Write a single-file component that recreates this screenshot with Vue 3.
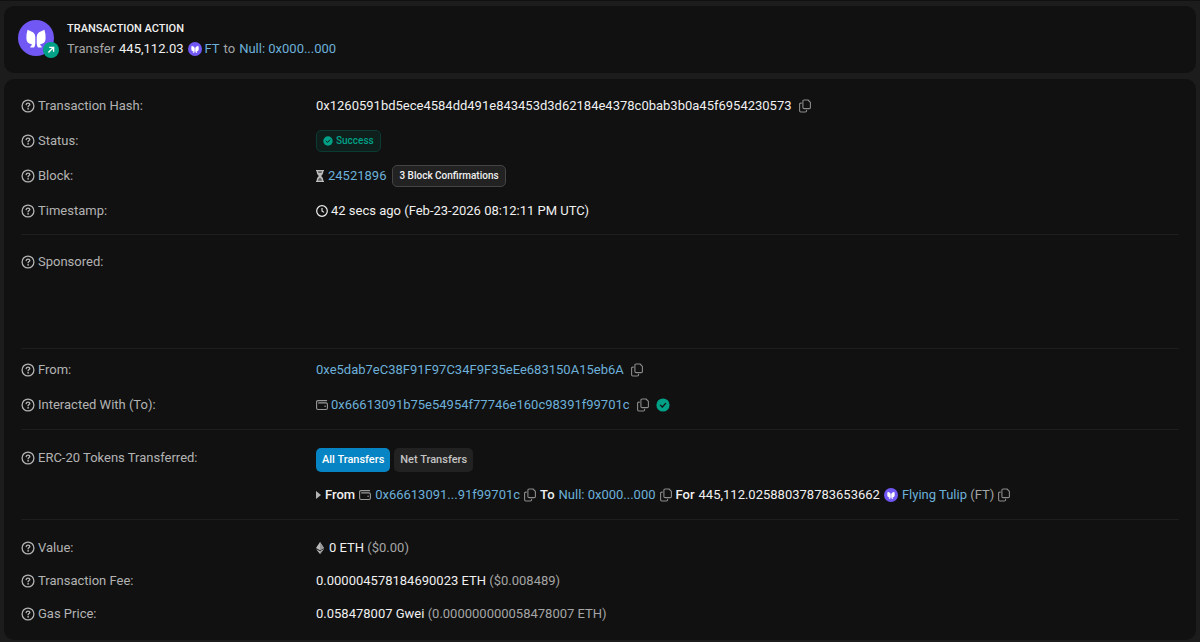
<script setup>
import { h } from 'vue'

const svg = (box, cls, children) =>
  h('svg', { viewBox: box, class: cls, 'aria-hidden': 'true' }, children)
const line = (d, w = 1.5) =>
  h('path', { d, fill: 'none', stroke: 'currentColor', 'stroke-width': w, 'stroke-linecap': 'round', 'stroke-linejoin': 'round' })

const HelpIcon = () =>
  svg('0 0 14 14', 'help', [
    h('circle', { cx: 7, cy: 7, r: 5.9, fill: 'none', stroke: 'currentColor', 'stroke-width': 1.3 }),
    line('M5.2 5.5C5.3 4.5 6 4.1 7 4.1C8.1 4.1 8.8 4.7 8.8 5.5C8.8 6.5 7.1 6.6 7.1 7.8', 1.4),
    h('circle', { cx: 7.1, cy: 9.8, r: 0.9, fill: 'currentColor' })
  ])

const CopyIcon = () =>
  svg('0 0 12 14', 'copy', [
    line('M5.1 1H9L11.4 3.4V8.4Q11.4 9.6 10.2 9.6H5.1Q3.9 9.6 3.9 8.4V2.2Q3.9 1 5.1 1Z', 1.1),
    line('M2.4 4.1H1.8Q.6 4.1 .6 5.3V11.8Q.6 13 1.8 13H6.4Q7.6 13 7.6 11.8V11.3', 1.1)
  ])

const WalletIcon = () =>
  svg('0 0 12 12', 'wallet', [
    line('M10.6 1.6H2.1Q.6 1.6 .6 3V9Q.6 10.5 2.1 10.5H9.9Q11.4 10.5 11.4 9V5.2Q11.4 3.9 9.9 3.9H2.6', 1.1),
    h('circle', { cx: 9.1, cy: 7.2, r: 0.8, fill: 'currentColor' })
  ])

const CheckIcon = () =>
  svg('0 0 14 14', 'check', [
    h('circle', { cx: 7, cy: 7, r: 6.6, fill: '#00a186' }),
    h('path', { d: 'M4.4 7.1L6.3 9L9.7 5.4', fill: 'none', stroke: '#111', 'stroke-width': 1.3, 'stroke-linecap': 'round' })
  ])

const TulipIcon = () =>
  svg('0 0 36 36', 'tulip', [
    h('circle', { cx: 18, cy: 18, r: 18, fill: '#7158f5' }),
    h('path', {
      fill: '#fff',
      d: 'M9.6 9.8L15 12.2Q17.3 13.8 17.3 17V23.4Q17.2 25.4 16 27.6H12.2Q12.4 25.8 14 25L13.6 24.2Q8.6 23.6 8.4 18.6Q8.2 13.6 9.6 9.8ZM26.4 9.8L21 12.2Q18.7 13.8 18.7 17V23.4Q18.8 25.4 20 27.6H23.8Q23.6 25.8 22 25L22.4 24.2Q27.4 23.6 27.6 18.6Q27.8 13.6 26.4 9.8Z'
    })
  ])

const Label = (props) => h('div', { class: 'label' }, [h(HelpIcon), h('span', props.text)])
Label.props = ['text']

const CopyButton = (props) =>
  h('button', { type: 'button', class: 'copy-button', 'aria-label': props.name }, [h(CopyIcon)])
CopyButton.props = ['name']
</script>

<template>
  <main class="page">
    <section class="card action">
      <div class="avatar">
        <TulipIcon />
        <span class="badge">
          <svg viewBox="0 0 16 16" aria-hidden="true">
            <path d="M5.4 10.6L10.4 5.6M6.2 5.4H10.6V9.8" fill="none" stroke="#fff" stroke-width="1.4" />
          </svg>
        </span>
      </div>
      <div>
        <h1>TRANSACTION ACTION</h1>
        <p class="summary">
          <span>Transfer</span>
          <span class="strong">445,112.03</span>
          <a href="#token" class="token"><TulipIcon />FT</a>
          <span>to</span>
          <a href="#null">Null: 0x000...000</a>
        </p>
      </div>
    </section>

    <section class="card details">
      <div class="group">
        <div class="row">
          <Label text="Transaction Hash:" />
          <div class="value hash">
            <span>0x1260591bd5ece4584dd491e843453d3d62184e4378c0bab3b0a45f6954230573</span>
            <CopyButton name="Copy transaction hash" />
          </div>
        </div>
        <div class="row">
          <Label text="Status:" />
          <div class="value"><span class="pill success"><CheckIcon />Success</span></div>
        </div>
        <div class="row">
          <Label text="Block:" />
          <div class="value block">
            <svg class="hourglass" viewBox="0 0 8 12" aria-hidden="true">
              <path d="M0 0H8V1.3H7.3C7.3 3.6 6.6 4.7 5.1 6C6.6 7.3 7.3 8.4 7.3 10.7H8V12H0V10.7H.7C.7 8.4 1.4 7.3 2.9 6C1.4 4.7 .7 3.6 .7 1.3H0Z" fill="currentColor" />
              <path d="M2 1.3H6L5.5 3H2.5ZM2 10.7C2.1 9.5 2.9 8.4 4 7.7C5.1 8.4 5.9 9.5 6 10.7Z" fill="#111" fill-opacity=".55" />
            </svg>
            <a href="#block">24521896</a>
            <span class="pill confirmations">3 Block Confirmations</span>
          </div>
        </div>
        <div class="row">
          <Label text="Timestamp:" />
          <div class="value time">
            <svg class="clock" viewBox="0 0 12 12" fill="none" stroke="currentColor" aria-hidden="true">
              <circle cx="6" cy="6" r="5.3" stroke-width="1.2" />
              <path d="M6 2.9V6L8 7.4" stroke-width="1.1" />
            </svg>
            <span>42 secs ago (Feb-23-2026 08:12:11 PM UTC)</span>
          </div>
        </div>
      </div>

      <div class="group sponsored">
        <div class="row"><Label text="Sponsored:" /></div>
      </div>

      <div class="group parties">
        <div class="row">
          <Label text="From:" />
          <div class="value address">
            <a href="#from">0xe5dab7eC38F91F97C34F9F35eEe683150A15eb6A</a>
            <CopyButton name="Copy sender address" />
          </div>
        </div>
        <div class="row">
          <Label text="Interacted With (To):" />
          <div class="value address">
            <span class="contract"><WalletIcon /><a href="#to">0x66613091b75e54954f77746e160c98391f99701c</a></span>
            <CopyButton name="Copy recipient address" />
            <CheckIcon />
          </div>
        </div>
      </div>

      <div class="group tokens">
        <div class="row">
          <Label text="ERC-20 Tokens Transferred:" />
          <div class="value">
            <button type="button" class="tab active">All Transfers</button>
            <button type="button" class="tab">Net Transfers</button>
          </div>
        </div>
        <div class="row">
          <div class="value transfer">
            <span class="caret"></span>
            <b>From</b>
            <WalletIcon />
            <a href="#sender">0x66613091...91f99701c</a>
            <CopyButton name="Copy token sender" />
            <b>To</b>
            <a href="#receiver">Null: 0x000...000</a>
            <CopyButton name="Copy token receiver" />
            <b>For</b>
            <span>445,112.025880378783653662</span>
            <TulipIcon />
            <span class="token-name"><a href="#tulip">Flying Tulip</a> <span class="muted">(FT)</span></span>
            <CopyButton name="Copy token address" />
          </div>
        </div>
      </div>

      <div class="group fees">
        <div class="row">
          <Label text="Value:" />
          <div class="value eth">
            <svg class="ether" viewBox="0 0 8 12" aria-hidden="true">
              <path d="M4 0L0 6.1L4 8.3L8 6.1ZM0 7L4 12L8 7L4 9.2Z" fill="#bbb" />
              <path d="M4 0V8.3L8 6.1ZM4 9.2V12L8 7Z" fill="#999" />
            </svg>
            <span>0 ETH <span class="muted">($0.00)</span></span>
          </div>
        </div>
        <div class="row">
          <Label text="Transaction Fee:" />
          <div class="value"><span>0.000004578184690023 ETH <span class="muted">($0.008489)</span></span></div>
        </div>
        <div class="row">
          <Label text="Gas Price:" />
          <div class="value"><span>0.058478007 Gwei <span class="muted">(0.000000000058478007 ETH)</span></span></div>
        </div>
      </div>
    </section>
  </main>
</template>

<style>
body {
  background: #1c1c1c;
}
</style>

<style scoped>
.page {
  box-sizing: border-box;
  min-height: 100vh;
  padding: 5px 4px 2px;
  display: flex;
  flex-direction: column;
  gap: 6px;
  border-top: 1px solid #111;
  color: #f0f0f0;
  font: 13px/20px Roboto, "Liberation Sans", sans-serif;
}
.page :deep(svg) {
  display: block;
  flex: none;
}
.card {
  background: #111;
  border-radius: 10px;
}
a {
  color: #6cb0d9;
  text-decoration: none;
}
.muted {
  color: #a5a5a5;
}

.action {
  display: flex;
  gap: 13px;
  padding: 13px 14px 14px;
}
.avatar {
  position: relative;
  width: 36px;
  height: 36px;
  padding: 1px 0;
}
.avatar .tulip {
  width: 36px;
  height: 36px;
}
.badge {
  position: absolute;
  right: -5px;
  bottom: -1px;
  width: 16px;
  height: 16px;
  border-radius: 50%;
  background: #00a186;
}
h1 {
  margin: 0;
  font-size: 11px;
  line-height: 20px;
  font-weight: 500;
}
.summary {
  display: flex;
  align-items: center;
  gap: 4px;
  margin: 0;
  color: #a5a5a5;
}
.strong {
  color: #f0f0f0;
}
.token {
  display: flex;
  align-items: center;
  gap: 3px;
}
.token .tulip,
.transfer .tulip {
  width: 14px;
  height: 14px;
}

.details {
  flex: 1;
  padding: 0 17px;
}
.group {
  padding: 9px 0 6px;
  border-bottom: 1px solid #1e1e1e;
}
.group:last-child {
  border-bottom: 0;
}
.row {
  display: grid;
  grid-template-columns: 295px 1fr;
  align-items: center;
  min-height: 35px;
}
:deep(.label) {
  display: flex;
  align-items: center;
  gap: 3px;
  color: #b3b3b3;
}
:deep(.help) {
  width: 14px;
  height: 14px;
}
.value {
  display: flex;
  align-items: center;
  gap: 4px;
  white-space: nowrap;
}
.hash,
.address {
  gap: 7px;
}
:deep(.copy-button) {
  padding: 0;
  border: 0;
  background: none;
  color: #8c8c8c;
}
:deep(.copy) {
  width: 12px;
  height: 14px;
}
.wallet {
  width: 12px;
  height: 12px;
  color: #999;
}
.contract,
.time {
  display: flex;
  align-items: center;
  gap: 3px;
}
.check {
  width: 14px;
  height: 14px;
}
.pill {
  display: flex;
  align-items: center;
  gap: 3px;
  padding: 0 6px;
  border: 1px solid #444;
  border-radius: 5px;
  font-size: 10px;
  font-weight: 500;
}
.success {
  color: #00a186;
  background: #0e1f1c;
  border-color: #0d3a33;
}
.success .check {
  width: 10px;
  height: 10px;
}
.confirmations {
  margin-left: 2px;
  background: #222;
}
.hourglass,
.ether {
  width: 8px;
  height: 12px;
  color: #bbb;
}
.clock {
  width: 12px;
  height: 12px;
}
.sponsored {
  min-height: 98px;
}
.parties {
  padding: 3px 0 7px;
}
.tokens {
  padding: 12px 0 7px;
}
.tokens .label {
  padding-bottom: 4px;
}
.tab {
  padding: 0 6px;
  border: 0;
  border-radius: 5px;
  background: #222;
  color: #c4c4c4;
  font: 500 11px/24px Roboto, "Liberation Sans", sans-serif;
}
.active {
  background: #0784c3;
  color: #fff;
}
.transfer {
  grid-column: 2;
}
.transfer b {
  font-weight: 500;
}
.caret {
  border: solid transparent;
  border-width: 4px 0 4px 5px;
  border-left-color: #b3b3b3;
}
.fees {
  padding: 11px 0 9px;
}
.fees .row {
  min-height: 33px;
}
.eth {
  gap: 5px;
}
</style>
